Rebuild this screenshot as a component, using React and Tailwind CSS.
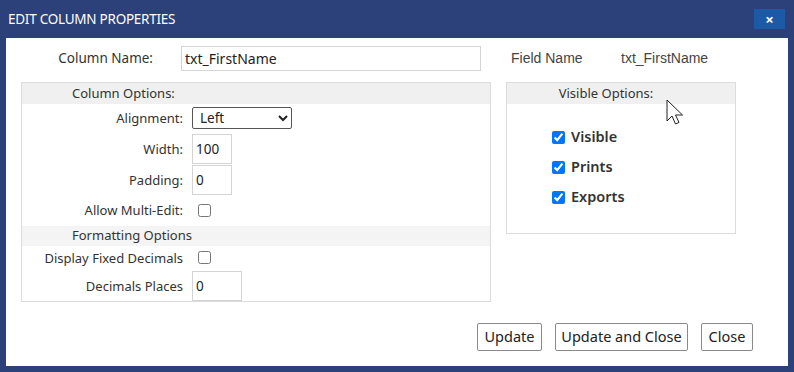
import React, { useState } from 'react';

const Row = ({ label, children, className = '' }) => (
  <div className={`flex items-center ${className}`}>
    <div className="w-[161px] text-right text-[13px] text-[#333] leading-none">{label}</div>
    <div className="ml-[9px] flex items-center">{children}</div>
  </div>
);

const App = () => {
  const [columnName, setColumnName] = useState('txt_FirstName');
  const [alignment, setAlignment] = useState('Left');
  const [width, setWidth] = useState('100');
  const [padding, setPadding] = useState('0');
  const [decimals, setDecimals] = useState('0');
  const [visible, setVisible] = useState({ visible: true, prints: true, exports: true });

  return (
    <div className="w-[794px] h-[372px] bg-[#2c4079] flex flex-col font-['Noto_Sans',sans-serif]">
      <div className="h-[38px] flex items-center justify-between pl-[8px] pr-[9px]">
        <span className="text-white text-[13.5px] tracking-[-0.25px]">EDIT COLUMN PROPERTIES</span>
        <button className="w-[31px] h-[20px] bg-[#1c5aa6] text-white text-[15px] font-bold leading-none flex items-center justify-center">×</button>
      </div>

      <div className="relative flex-1 mx-[6px] mb-[6px] bg-white">
        <div className="flex items-center pt-[8px]">
          <label className="w-[147px] text-right text-[13.5px] text-[#333]">Column Name:</label>
          <input
            value={columnName}
            onChange={(e) => setColumnName(e.target.value)}
            className="ml-[28px] w-[300px] h-[25px] border border-[#d4d4d4] px-[3px] text-[14px] text-[#222] outline-none"
          />
          <span className="ml-[30px] w-[110px] text-[14px] text-[#444] font-['Liberation_Sans',Arial,sans-serif]">Field Name</span>
          <span className="text-[14px] text-[#444] font-['Liberation_Sans',Arial,sans-serif]">txt_FirstName</span>
        </div>

        <div className="flex items-start mt-[11px] ml-[15px]">
          <div className="w-[470px] border border-[#dcdcdc]">
            <div className="h-[21px] bg-[#f0f0f0] flex items-center">
              <span className="pl-[50px] text-[13px] text-[#333]">Column Options:</span>
            </div>
            <Row label="Alignment:" className="mt-[3px]">
              <select
                value={alignment}
                onChange={(e) => setAlignment(e.target.value)}
                className="w-[100px] h-[22px] border border-[#555] rounded-[2px] pl-[3px] text-[13.5px] text-[#222] bg-white"
              >
                <option>Left</option>
                <option>Center</option>
                <option>Right</option>
              </select>
            </Row>
            <Row label="Width:" className="mt-[5px]">
              <input value={width} onChange={(e) => setWidth(e.target.value)} className="w-[40px] h-[30px] border border-[#d4d4d4] px-[3px] text-[13.5px] text-[#222] outline-none" />
            </Row>
            <Row label="Padding:" className="mt-[1px]">
              <input value={padding} onChange={(e) => setPadding(e.target.value)} className="w-[40px] h-[30px] border border-[#d4d4d4] px-[3px] text-[13.5px] text-[#222] outline-none" />
            </Row>
            <Row label="Allow Multi-Edit:" className="h-[31px]">
              <input type="checkbox" className="ml-[6px] w-[13px] h-[13px]" />
            </Row>
            <div className="h-[20px] bg-[#f4f4f4] flex items-center">
              <span className="pl-[50px] text-[13px] text-[#333]">Formatting Options</span>
            </div>
            <Row label="Display Fixed Decimals" className="h-[25px]">
              <input type="checkbox" className="ml-[6px] w-[13px] h-[13px] -mt-[2px]" />
            </Row>
            <Row label="Decimals Places">
              <input value={decimals} onChange={(e) => setDecimals(e.target.value)} className="w-[50px] h-[30px] border border-[#d4d4d4] px-[3px] text-[13.5px] text-[#222] outline-none" />
            </Row>
          </div>

          <div className="ml-[15px] w-[230px] h-[152px] border border-[#dcdcdc]">
            <div className="h-[21px] bg-[#f0f0f0] flex items-center justify-center pr-[30px]">
              <span className="text-[13px] text-[#333]">Visible Options:</span>
            </div>
            <div className="flex flex-col pl-[45px] pt-[23px] gap-[10px]">
              {[
                ['visible', 'Visible'],
                ['prints', 'Prints'],
                ['exports', 'Exports'],
              ].map(([key, text]) => (
                <label key={key} className="flex items-center h-[20px]">
                  <input
                    type="checkbox"
                    checked={visible[key]}
                    onChange={() => setVisible({ ...visible, [key]: !visible[key] })}
                    className="w-[13px] h-[13px]"
                  />
                  <span className="ml-[6px] text-[14.5px] font-semibold text-[#333]">{text}</span>
                </label>
              ))}
            </div>
          </div>
        </div>

        <div className="flex justify-end mt-[21px] mr-[35px] gap-[13px]">
          <button className="w-[65px] h-[28px] border border-[#8a8a8a] rounded-[2px] bg-white text-[14.5px] text-[#222]">Update</button>
          <button className="w-[133px] h-[28px] border border-[#8a8a8a] rounded-[2px] bg-white text-[14.5px] text-[#222]">Update and Close</button>
          <button className="w-[52px] h-[28px] border border-[#8a8a8a] rounded-[2px] bg-white text-[14.5px] text-[#222]">Close</button>
        </div>

        {/* mouse pointer over the panel */}
        <svg className="absolute left-[660px] top-[61px]" width="20" height="30" viewBox="0 0 20 30">
          <path d="M1 1 L1 22 L6 17 L9.5 25 L13 23.5 L9.5 16 L16.5 16 Z" fill="white" stroke="#222" strokeWidth="1" strokeLinejoin="round" />
        </svg>
      </div>
    </div>
  );
};

export default App;
